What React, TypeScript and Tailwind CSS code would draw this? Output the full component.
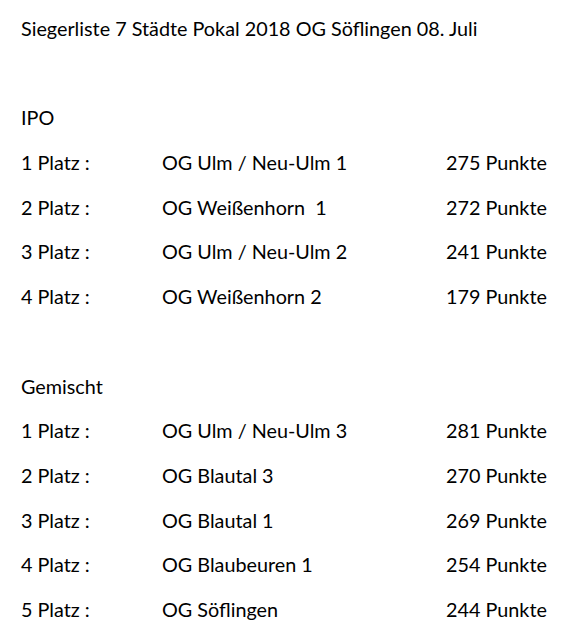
const ipo = [
  { place: "1 Platz :", team: "OG Ulm / Neu-Ulm 1", points: "275 Punkte" },
  { place: "2 Platz :", team: "OG Weißenhorn  1", points: "272 Punkte" },
  { place: "3 Platz :", team: "OG Ulm / Neu-Ulm 2", points: "241 Punkte" },
  { place: "4 Platz :", team: "OG Weißenhorn 2", points: "179 Punkte" },
];

const gemischt = [
  { place: "1 Platz :", team: "OG Ulm / Neu-Ulm 3", points: "281 Punkte" },
  { place: "2 Platz :", team: "OG Blautal 3", points: "270 Punkte" },
  { place: "3 Platz :", team: "OG Blautal 1", points: "269 Punkte" },
  { place: "4 Platz :", team: "OG Blaubeuren 1", points: "254 Punkte" },
  { place: "5 Platz :", team: "OG Söflingen", points: "244 Punkte" },
];

type Row = { place: string; team: string; points: string };

const Line = ({ children }: { children?: React.ReactNode }) => (
  <div className="h-[44.7px] whitespace-pre">{children}</div>
);

const Rows = ({ rows }: { rows: Row[] }) => (
  <>
    {rows.map((r) => (
      <div key={r.place} className="grid grid-cols-[141px_284px_auto] h-[44.7px] whitespace-pre">
        <span>{r.place}</span>
        <span>{r.team}</span>
        <span>{r.points}</span>
      </div>
    ))}
  </>
);

export default function App() {
  return (
    <main className="w-[569px] h-[644px] bg-white text-black overflow-hidden pl-[21px] pt-[6px] font-['Lato',sans-serif] text-[19.8px] leading-[44.7px]">
      <Line>Siegerliste 7 Städte Pokal 2018 OG Söflingen 08. Juli</Line>
      <Line />
      <Line>IPO</Line>
      <Rows rows={ipo} />
      <Line />
      <Line>Gemischt</Line>
      <Rows rows={gemischt} />
    </main>
  );
}
